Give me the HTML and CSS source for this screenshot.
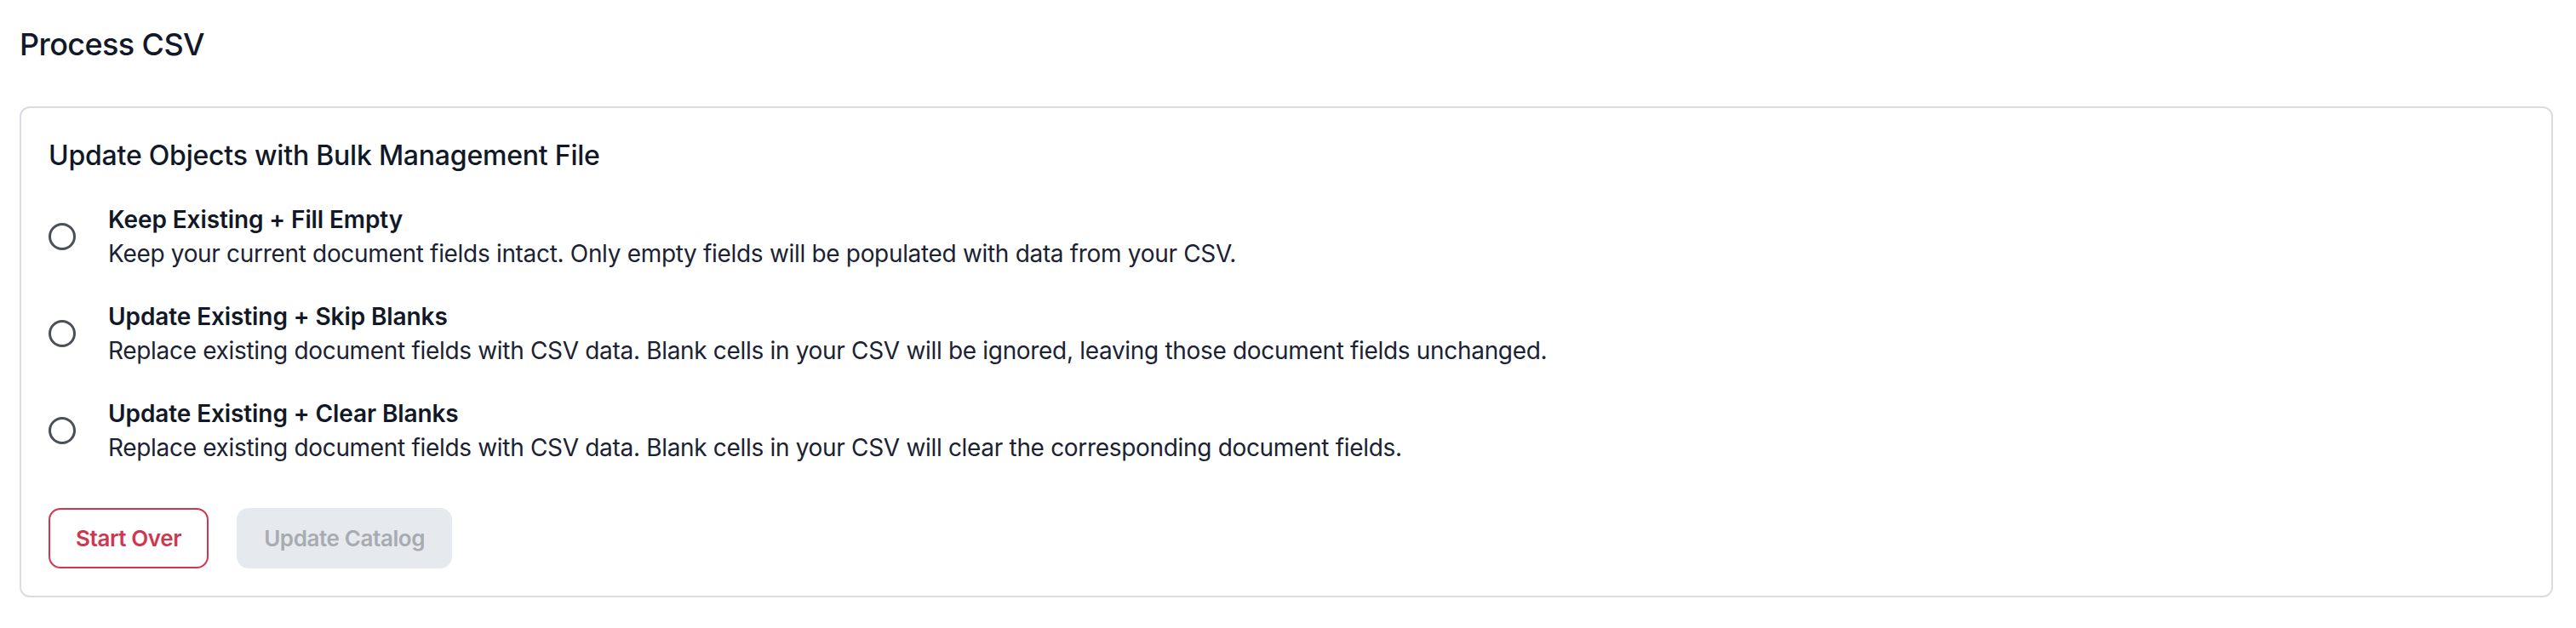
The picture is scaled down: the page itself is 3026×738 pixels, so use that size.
FILE: index.html
```html
<!DOCTYPE html>
<html lang="en">
<head>
<meta charset="utf-8">
<title>Process CSV</title>
<link rel="stylesheet" href="styles.css">
</head>
<body>
<main class="page">
  <h1 class="page-title">Process CSV</h1>
  <section class="card">
    <h2 class="card-title">Update Objects with Bulk Management File</h2>
    <div class="options">
      <label class="option">
        <input type="radio" name="mode" class="radio">
        <span class="option-text">
          <span class="option-title">Keep Existing + Fill Empty</span>
          <span class="option-desc">Keep your current document fields intact. Only empty fields will be populated with data from your CSV.</span>
        </span>
      </label>
      <label class="option">
        <input type="radio" name="mode" class="radio">
        <span class="option-text">
          <span class="option-title">Update Existing + Skip Blanks</span>
          <span class="option-desc">Replace existing document fields with CSV data. Blank cells in your CSV will be ignored, leaving those document fields unchanged.</span>
        </span>
      </label>
      <label class="option">
        <input type="radio" name="mode" class="radio">
        <span class="option-text">
          <span class="option-title">Update Existing + Clear Blanks</span>
          <span class="option-desc">Replace existing document fields with CSV data. Blank cells in your CSV will clear the corresponding document fields.</span>
        </span>
      </label>
    </div>
    <div class="actions">
      <button type="button" class="btn btn-outline">Start Over</button>
      <button type="button" class="btn btn-disabled" disabled>Update Catalog</button>
    </div>
  </section>
</main>
</body>
</html>
```

FILE: styles.css
```css
* { box-sizing: border-box; }

html, body {
  margin: 0;
  padding: 0;
  background: #ffffff;
}

body {
  font-family: "Inter", "Noto Sans", "Liberation Sans", sans-serif;
  color: #111827;
}

.page {
  padding: 24px 27px 0 23px;
}

.page-title {
  margin: 0 0 45px 0;
  font-size: 36px;
  line-height: 56px;
  font-weight: 500;
  letter-spacing: -0.6px;
  color: #111827;
}

.card {
  border: 2px solid #d9dde3;
  border-radius: 12px;
  padding: 32px;
  background: #ffffff;
}

.card-title {
  margin: 0 0 31px 0;
  font-size: 32px;
  line-height: 48px;
  font-weight: 500;
  letter-spacing: -0.22px;
  color: #111827;
}

.options {
  display: flex;
  flex-direction: column;
  gap: 34px;
}

.option {
  display: flex;
  align-items: center;
  gap: 38px;
}

.radio {
  appearance: none;
  -webkit-appearance: none;
  margin: 0;
  width: 32px;
  height: 32px;
  flex: 0 0 32px;
  border: 3px solid #4b4f57;
  border-radius: 50%;
  background: #ffffff;
}

.option-text {
  display: flex;
  flex-direction: column;
}

.option-title {
  font-size: 28px;
  line-height: 40px;
  font-weight: 600;
  letter-spacing: -0.1px;
  color: #111827;
}

.option-desc {
  font-size: 28px;
  line-height: 40px;
  font-weight: 400;
  letter-spacing: -0.32px;
  color: #1a2233;
}

.actions {
  display: flex;
  gap: 33px;
  margin-top: 51px;
}

.btn {
  height: 71px;
  padding: 0 30px;
  border-radius: 14px;
  font-family: inherit;
  font-size: 26px;
  font-weight: 600;
  letter-spacing: -0.4px;
  line-height: 1;
}

.btn-outline {
  background: #ffffff;
  border: 2px solid #d0364f;
  color: #d0364f;
}

.btn-disabled {
  background: #e6e9ee;
  border: 2px solid #e6e9ee;
  color: #a8abb1;
}
```
